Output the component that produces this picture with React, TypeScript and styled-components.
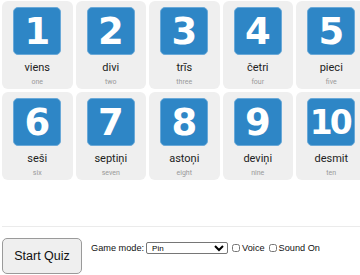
import React from 'react';
import styled, { createGlobalStyle } from 'styled-components';

const GlobalStyle = createGlobalStyle`
  html, body {
    margin: 0;
    padding: 0;
    background: #ffffff;
    overflow: hidden;
    font-family: "Liberation Sans", Arial, sans-serif;
  }
`;

const numbers = [
  { n: '1', word: 'viens', en: 'one' },
  { n: '2', word: 'divi', en: 'two' },
  { n: '3', word: 'trīs', en: 'three' },
  { n: '4', word: 'četri', en: 'four' },
  { n: '5', word: 'pieci', en: 'five' },
  { n: '6', word: 'seši', en: 'six' },
  { n: '7', word: 'septiņi', en: 'seven' },
  { n: '8', word: 'astoņi', en: 'eight' },
  { n: '9', word: 'deviņi', en: 'nine' },
  { n: '10', word: 'desmit', en: 'ten' },
];

const Page = styled.div`
  width: 370px;
`;

const Grid = styled.div`
  display: grid;
  grid-template-columns: repeat(5, 70.5px);
  gap: 3px;
  padding: 1px 0 0 2px;
`;

const Card = styled.div`
  height: 88px;
  background: #efefef;
  border-radius: 6px;
  display: flex;
  flex-direction: column;
  align-items: center;
  box-sizing: border-box;
  padding-top: 6px;
`;

const Tile = styled.div<{ $wide: boolean }>`
  width: 48px;
  height: 48px;
  box-sizing: border-box;
  border-radius: 5px;
  background: #2e86c6;
  border: 1px solid #6aa9d8;
  color: #ffffff;
  display: flex;
  align-items: center;
  justify-content: center;
  font-family: "DejaVu Sans", "Liberation Sans", sans-serif;
  font-weight: bold;
  font-size: ${(p) => (p.$wide ? '33px' : '37px')};
  letter-spacing: ${(p) => (p.$wide ? '-3px' : '0')};
  padding-right: ${(p) => (p.$wide ? '3px' : '0')};
`;

const Word = styled.div`
  margin-top: 6px;
  font-family: Roboto, "Liberation Sans", sans-serif;
  font-size: 11px;
  color: #222222;
  line-height: 14px;
`;

const English = styled.div`
  margin-top: 3px;
  font-family: Roboto, "Liberation Sans", sans-serif;
  font-size: 7px;
  color: #999999;
  line-height: 9px;
`;

const Rule = styled.div`
  margin: 46px 0 0 2px;
  width: 358px;
  height: 1px;
  background: #ebebeb;
`;

const Controls = styled.div`
  display: flex;
  align-items: flex-start;
  margin-top: 11px;
  padding-left: 2px;
`;

const StartButton = styled.button`
  width: 80px;
  height: 36px;
  background: #efefef;
  border: 1px solid #9a9a9a;
  border-radius: 5px;
  font-family: "Liberation Sans", Arial, sans-serif;
  font-size: 12.5px;
  color: #111111;
  padding: 0;
`;

const Options = styled.div`
  display: flex;
  align-items: center;
  margin: 4px 0 0 9px;
  font-size: 9.2px;
  color: #111111;
`;

const Label = styled.span`
  margin-right: 2px;
`;

const Select = styled.select`
  width: 82px;
  height: 12px;
  font-size: 8px;
  padding: 0 0 0 1px;
  border: 1px solid #767676;
  border-radius: 2px;
  background: #ffffff;
  font-family: "Liberation Sans", Arial, sans-serif;
`;

const Check = styled.label`
  display: flex;
  align-items: center;
  margin-left: 4px;
`;

const Box = styled.input`
  width: 8px;
  height: 8px;
  margin: 0 2px 0 0;
`;

export default function App() {
  return (
    <Page>
      <GlobalStyle />
      <Grid>
        {numbers.map((item) => (
          <Card key={item.n}>
            <Tile $wide={item.n.length > 1}>{item.n}</Tile>
            <Word>{item.word}</Word>
            <English>{item.en}</English>
          </Card>
        ))}
      </Grid>
      <Rule />
      <Controls>
        <StartButton>Start Quiz</StartButton>
        <Options>
          <Label>Game mode:</Label>
          <Select defaultValue="pin">
            <option value="pin">Pin</option>
            <option value="type">Type</option>
          </Select>
          <Check>
            <Box type="checkbox" />
            Voice
          </Check>
          <Check>
            <Box type="checkbox" />
            Sound On
          </Check>
        </Options>
      </Controls>
    </Page>
  );
}
